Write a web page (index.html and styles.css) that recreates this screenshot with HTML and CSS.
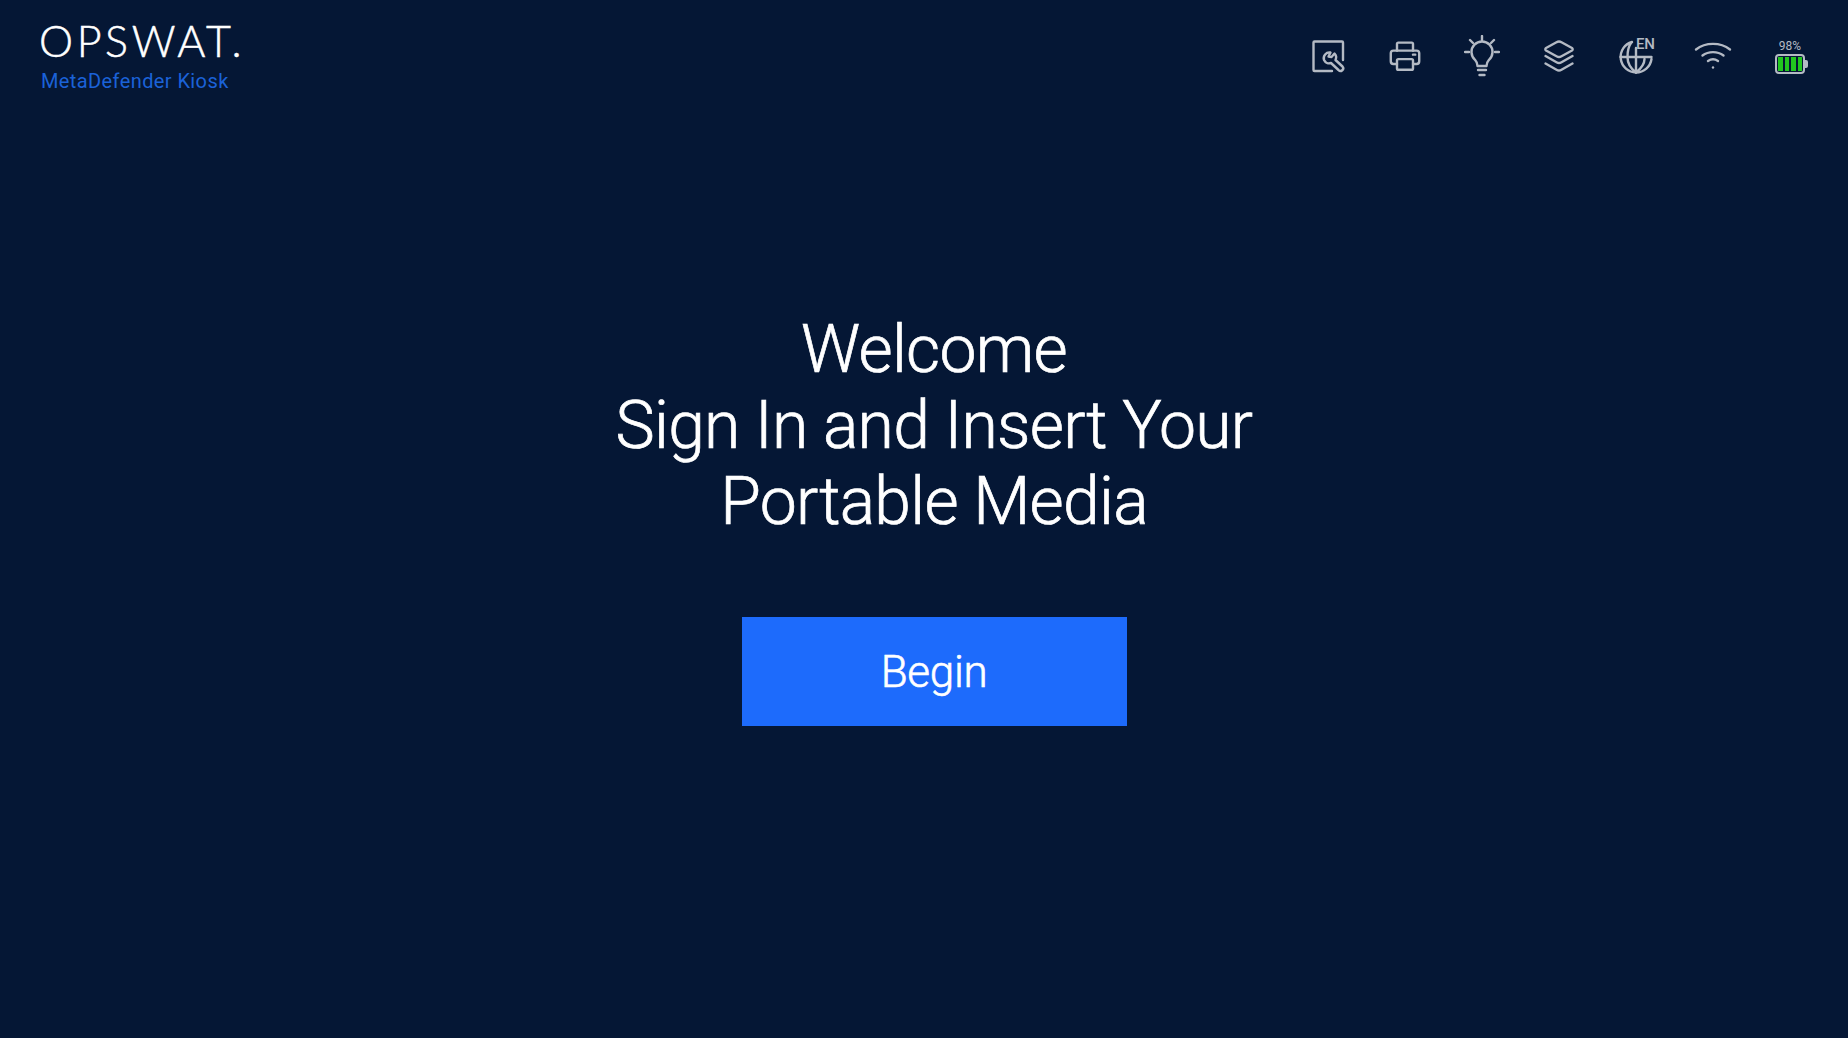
FILE: index.html
```html
<!DOCTYPE html>
<html lang="en">
<head>
  <meta charset="UTF-8" />
  <title>MetaDefender Kiosk</title>
  <link rel="stylesheet" href="styles.css">
</head>
<body>
  <header class="topbar">
    <div class="brand">
      <div class="logo">OPSWAT.</div>
      <div class="product">MetaDefender Kiosk</div>
    </div>
    <div class="tools">
      <div class="tool">
        <svg viewBox="0 0 36 36" width="36" height="36" fill="none" stroke="#b4bac4" stroke-width="2.4" stroke-linecap="round" stroke-linejoin="round">
          <path d="M33 22V4.500a1 1 0 0 0-1-1H4.500a1 1 0 0 0-1 1V32a1 1 0 0 0 1 1H22"/>
          <path d="M20.500 14.500a5.800 5.800 0 0 0-6.500 7.500a5.800 5.800 0 0 0 7 3L28.500 32a2.300 2.300 0 0 0 4-3.500L25.500 22a5.800 5.800 0 0 0-1-6.500l-3 3.500l-3-0.500z"/>
        </svg>
      </div>
      <div class="tool">
        <svg viewBox="0 0 36 36" width="32" height="32" fill="none" stroke="#b4bac4" stroke-width="2.700" stroke-linecap="round" stroke-linejoin="round">
          <path d="M9 12V4.500a1.500 1.500 0 0 1 1.500-1.500h15a1.500 1.500 0 0 1 1.500 1.500V12"/>
          <path d="M9 27H5a3 3 0 0 1-3-3V15a3 3 0 0 1 3-3h26a3 3 0 0 1 3 3v9a3 3 0 0 1-3 3h-4"/>
          <rect x="9" y="21.500" width="18" height="12" rx="1.500"/>
          <path d="M27 16.500h2.500"/>
        </svg>
      </div>
      <div class="tool">
        <svg viewBox="0 0 36 42" width="36" height="42" fill="none" stroke="#b4bac4" stroke-width="2.4" stroke-linecap="round" stroke-linejoin="round">
          <path d="M18 1v4M6 5l3 3M30 5l-3 3M1 17h4M31 17h4"/>
          <path d="M13.500 31c0-3-1-4.500-2.500-6.200a10.500 10.500 0 1 1 14 0C23.500 26.500 22.500 28 22.500 31z"/>
          <path d="M14 35h8M15.500 40h5"/>
        </svg>
      </div>
      <div class="tool">
        <svg viewBox="0 0 32 34" width="32" height="34" fill="none" stroke="#b4bac4" stroke-width="2.400" stroke-linecap="round" stroke-linejoin="round">
          <path d="M13.500 3.200a5 5 0 0 1 5 0L29 9a1.500 1.500 0 0 1 0 2.500L18.500 17.300a5 5 0 0 1-5 0L3 11.500a1.500 1.500 0 0 1 0-2.500z"/>
          <path d="M2.500 17L13.500 23.300a5 5 0 0 0 5 0L29.500 17"/>
          <path d="M2.500 24.500L13.500 30.800a5 5 0 0 0 5 0L29.500 24.500"/>
        </svg>
      </div>
      <div class="tool">
        <svg viewBox="0 0 36 36" width="36" height="36" fill="none" stroke="#b4bac4" stroke-width="2.400" stroke-linecap="round" stroke-linejoin="round">
          <path d="M14 4a15.500 15.500 0 1 0 19.500 17"/>
          <path d="M2.500 19h31M18 10v24.500"/>
          <path d="M13 5C10 9 9.500 14 9.500 19s1 10 8.500 15.500C25 29 26.500 25 26.500 21"/>
        </svg>
        <span class="lang">EN</span>
      </div>
      <div class="tool">
        <svg viewBox="0 0 38 30" width="38" height="30" fill="none" stroke="#b4bac4" stroke-width="2.4" stroke-linecap="round" stroke-linejoin="round">
          <path d="M2 8.500C11.500 1 26.500 1 36 8.500"/>
          <path d="M8.500 14.500c6-4.500 15-4.500 21 0"/>
          <path d="M14 20c3-2 7-2 10 0"/>
          <circle cx="19" cy="26.500" r="1.200" fill="#b4bac4" stroke="none"/>
        </svg>
      </div>
      <div class="tool battery-tool">
        <div class="percent">98%</div>
        <div class="battery">
          <div class="cells">
            <span class="cell"></span><span class="cell"></span><span class="cell"></span><span class="cell"></span>
          </div>
        </div>
      </div>
    </div>
  </header>

  <main class="welcome">
    <h1>Welcome<br>Sign In and Insert Your<br>Portable Media</h1>
    <button class="begin">Begin</button>
  </main>
</body>
</html>
```

FILE: styles.css
```css
* {
  box-sizing: border-box;
}
html, body {
  height: 100%;
}
body {
  margin: 0;
  background: #051735;
  color: #fff;
  font-family: Roboto, "Noto Sans", sans-serif;
  display: flex;
  flex-direction: column;
}
.topbar {
  display: flex;
  justify-content: space-between;
  align-items: flex-start;
  padding: 19px 30px 0 39px;
  height: 100px;
}
.brand {
  display: flex;
  flex-direction: column;
}
.logo {
  font-family: Lato, sans-serif;
  font-weight: 300;
  font-size: 43px;
  line-height: 44px;
  letter-spacing: 3.600px;
  -webkit-text-stroke: 0.5px #fff;
}
.product {
  font-size: 20px;
  line-height: 24px;
  color: #1b62d8;
  margin: 6px 0 0 2px;
  letter-spacing: 0.4px;
}
.tools {
  display: flex;
  gap: 21px;
  margin-top: 16px;
}
.tool {
  width: 56px;
  height: 42px;
  display: flex;
  align-items: center;
  justify-content: center;
  position: relative;
}
.lang {
  position: absolute;
  top: 0;
  right: 8px;
  padding: 0 1px 0 2px;
  font-size: 15px;
  line-height: 18px;
  font-weight: 500;
  color: #b4bac4;
}
.battery-tool {
  flex-direction: column;
  gap: 1px;
}
.percent {
  font-size: 12px;
  line-height: 14px;
  color: #b4bac4;
}
.battery {
  width: 30px;
  height: 20px;
  border: 2px solid #b4bac4;
  border-radius: 4px;
  padding: 1px;
  position: relative;
}
.battery::after {
  content: "";
  position: absolute;
  right: -5px;
  top: 4px;
  width: 3px;
  height: 8px;
  background: #b4bac4;
  border-radius: 0 2px 2px 0;
}
.cells {
  display: flex;
  gap: 2px;
  height: 100%;
}
.cell {
  flex: 1;
  background: #22c71f;
}
.welcome {
  display: flex;
  flex-direction: column;
  align-items: center;
  padding-top: 212px;
  padding-left: 20px;
}
h1 {
  margin: 0;
  font-weight: 300;
  font-size: 66px;
  line-height: 76px;
  letter-spacing: -0.7px;
  -webkit-text-stroke: 0.7px #fff;
  text-align: center;
}
.begin {
  margin-top: 77px;
  width: 385px;
  height: 109px;
  border: 0;
  background: #1d6bfc;
  color: #fff;
  font-family: inherit;
  font-size: 44px;
  font-weight: 300;
  letter-spacing: -0.3px;
  -webkit-text-stroke: 0.6px #fff;
}
```
